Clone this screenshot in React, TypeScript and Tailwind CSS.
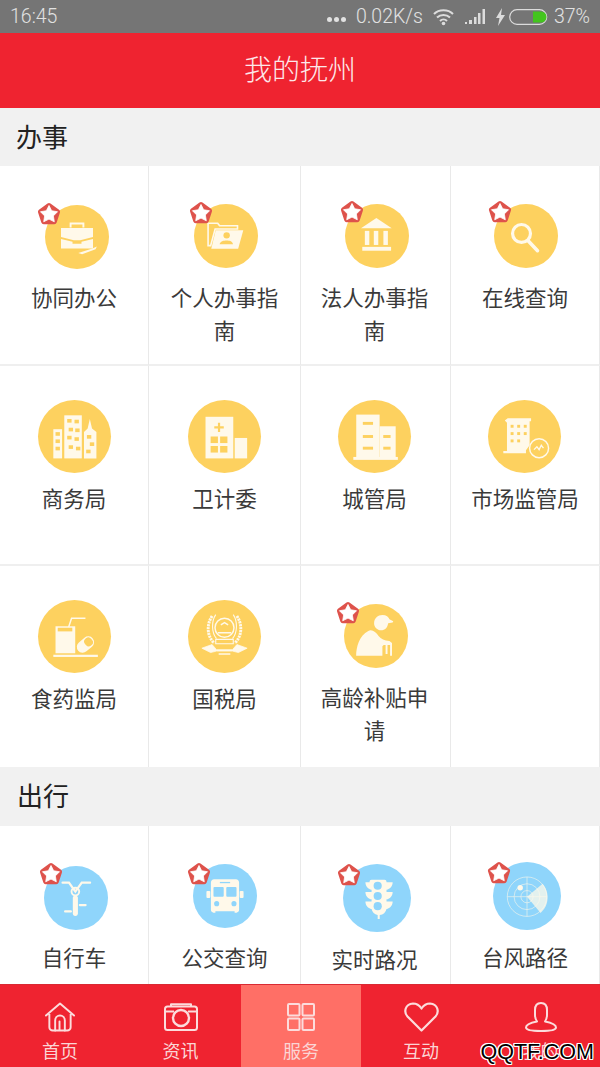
import React from "react";

const Y = "#fff9ea";
const YB = "#fdd15f";
const BL = "#8fd5fb";

const Briefcase = () => (
  <g fill={Y}>
    <path d="M25 36h50v14l-20 5H45L25 50z" />
    <path d="M25 53l18 4.500v3h14v-3l18-4.500v15H25z" />
    <path d="M40 35v-6h20v6" fill="none" stroke={Y} strokeWidth="3" />
    <path d="M52 75l22-7 7-3-2 4-21 8z" />
  </g>
);
const Folder = () => (
  <g>
    <path d="M22 30h15l3 4h28v5H33l-7 26h-4z" fill="none" stroke={Y} strokeWidth="2.500" />
    <path d="M34 41h43l-8 29H27z" fill={Y} />
    <circle cx="51" cy="49" r="5" fill={YB} />
    <path d="M40 63c1-5 6-6 11-6s9 1 10 6z" fill={YB} />
  </g>
);
const Bank = () => (
  <g fill={Y}>
    <path d="M49 22L25 38h48z" />
    <rect x="31" y="42" width="7" height="22" />
    <rect x="45" y="42" width="7" height="22" />
    <rect x="60" y="42" width="7" height="22" />
    <rect x="27" y="67" width="45" height="6" />
  </g>
);
const Search = () => (
  <g fill="none" stroke={Y}>
    <circle cx="43" cy="46" r="14" strokeWidth="5" />
    <path d="M53 57l15 16" strokeWidth="5.500" strokeLinecap="round" />
  </g>
);
const City = () => (
  <g>
    <g fill={Y}>
      <rect x="21" y="40" width="12" height="40" />
      <rect x="36" y="21" width="24" height="59" />
      <path d="M63 80V44l5-5 3-13 3 13 6 5v36z" />
    </g>
    <g fill={YB}>
      {[[24, 44], [24, 54], [24, 64], [40, 26], [50, 27], [42, 38], [51, 39], [40, 49], [50, 51], [42, 62], [52, 64], [67, 48], [71, 58], [66, 68]].map(([x, y], i) => (
        <rect key={i} x={x} y={y} width="6" height="5" />
      ))}
    </g>
  </g>
);
const Hospital = () => (
  <g>
    <g fill={Y}>
      <rect x="24" y="23" width="38" height="57" />
      <rect x="64" y="52" width="17" height="28" />
    </g>
    <g fill={YB}>
      <path d="M41 31h3v5h5v3h-5v5h-3v-5h-5v-3h5z" />
      <rect x="31" y="50" width="10" height="9" />
      <rect x="44" y="50" width="10" height="9" />
      <rect x="31" y="63" width="10" height="9" />
      <rect x="44" y="63" width="10" height="9" />
    </g>
  </g>
);
const Urban = () => (
  <g>
    <g fill={Y}>
      <rect x="25" y="20" width="32" height="60" />
      <rect x="57" y="36" width="22" height="44" />
      <rect x="21" y="78" width="61" height="4" />
    </g>
    <g fill={YB}>
      <rect x="34" y="30" width="14" height="4" />
      <rect x="34" y="48" width="14" height="4" />
      <rect x="34" y="64" width="14" height="4" />
      <rect x="62" y="48" width="10" height="4" />
      <rect x="62" y="64" width="10" height="4" />
    </g>
  </g>
);
const Market = () => (
  <g>
    <g fill={Y}>
      <path d="M23 28l4-3h32v4h-2v33l-5 7v4H21v-3h5V31z" />
    </g>
    <g fill={YB}>
      {[[31, 34], [40, 34], [49, 34], [31, 44], [40, 44], [49, 44], [31, 54], [40, 54]].map(([x, y], i) => (
        <rect key={i} x={x} y={y} width="4" height="4" />
      ))}
    </g>
    <circle cx="70" cy="66" r="13" fill={YB} stroke={Y} strokeWidth="2" />
    <path d="M63 68l4-4 3 4 3-6 3 4" fill="none" stroke={Y} strokeWidth="1.800" />
  </g>
);
const Food = () => (
  <g>
    <path d="M24 36h27v37H24z" fill={Y} />
    <rect x="27" y="38" width="20" height="5" fill={YB} />
    <path d="M42 37l4-12h19" fill="none" stroke={Y} strokeWidth="2" />
    <rect x="21" y="75" width="61" height="3" fill={Y} />
    <g transform="rotate(-40 65 61)">
      <rect x="52" y="53" width="26" height="16" rx="8" fill={Y} />
      <rect x="65" y="55" width="11" height="12" rx="5" fill={YB} />
    </g>
  </g>
);
const Emblem = () => (
  <g fill="none" stroke={Y}>
    <circle cx="50" cy="38" r="13" strokeWidth="2" />
    <path d="M45 34l5-3 5 3M41 45h18" strokeWidth="2" />
    <path d="M33 22c-8 12-7 28 3 37M67 22c8 12 7 28-3 37" strokeWidth="4" strokeDasharray="3 1" />
    <path d="M38 20c-6 9-6 24 1 33M62 20c6 9 6 24-1 33" strokeWidth="1.500" />
    <path d="M38 54h24v6H38z" strokeWidth="1.500" />
    <path d="M19 66l14-5 6 7h22l6-7 14 5-12 6-8-2H39l-8 2z" fill={Y} strokeWidth="1" />
    <path d="M42 74h16" strokeWidth="2" />
  </g>
);
const Elder = () => (
  <g fill={Y}>
    <path d="M47 30c0-8 6-13 13-13 6 0 10 3 11 7l6 3-1 2-7 1c-1 7-5 11-11 11-6 0-11-5-11-11z" />
    <path d="M38 42c6-3 12 2 16 8 4 5 9 7 17 8l4 3v20h-3V64h-4v14h-3V64h-3l-2 2v15H19c0-14 5-32 19-39z" />
  </g>
);
const Bike = () => (
  <g fill="none" stroke={Y} strokeLinecap="round">
    <path d="M29 26h10l10 14 10-14h13" strokeWidth="3.500" />
    <circle cx="49" cy="40" r="6" strokeWidth="3" />
    <path d="M49 50v24" strokeWidth="8" />
    <path d="M33 71h9M56 61h9" strokeWidth="3.500" />
  </g>
);
const Bus = () => (
  <g>
    <path d="M33 24h34c3 0 5 2 5 5v43c0 2-2 4-4 4h-3v-2H35v2h-3c-2 0-4-2-4-4V29c0-3 2-5 5-5z" fill={Y} />
    <rect x="32" y="36" width="16" height="15" rx="1.500" fill={BL} />
    <rect x="52" y="36" width="16" height="15" rx="1.500" fill={BL} />
    <rect x="42" y="28" width="16" height="2" fill={BL} />
    <circle cx="37" cy="62" r="4" fill={BL} />
    <circle cx="64" cy="62" r="4" fill={BL} />
    <rect x="21" y="42" width="6" height="11" rx="1.500" fill={Y} />
    <rect x="73" y="42" width="6" height="11" rx="1.500" fill={Y} />
  </g>
);
const Traffic = () => (
  <g>
    <path d="M30 27h9v-1a3 3 0 013-3h19a3 3 0 013 3v1h9c0 6-4 10-9 11v3h9c0 6-4 10-9 11v3h9c0 6-4 10-9 11a12 12 0 01-10 9v6h-3v-6a12 12 0 01-9-9c-5-1-9-5-9-11h9v-3c-5-1-9-5-9-11h9v-3c-5-1-9-5-9-11z" fill={Y} />
    <circle cx="51" cy="32" r="6" fill={BL} />
    <circle cx="51" cy="47" r="6" fill={BL} />
    <circle cx="51" cy="62" r="6" fill={BL} />
  </g>
);
const Radar = () => (
  <g>
    <g fill="none" stroke={Y} strokeWidth="1" opacity="0.85">
      <circle cx="50" cy="51" r="29" />
      <circle cx="50" cy="51" r="19" />
      <circle cx="50" cy="51" r="9" />
      <path d="M50 22v58M21 51h58" />
    </g>
    <path d="M50 51l23-19c7 8 9 20 6 29-1 5-5 10-9 14z" fill={Y} opacity="0.75" />
    <circle cx="40" cy="38" r="4" fill={Y} />
  </g>
);

const starD = "M13 4.500L15.700 9.780 21.560 10.720 17.370 14.920 18.290 20.780 13 18.100 7.710 20.780 8.630 14.920 4.440 10.720 10.300 9.780z";
const pentD = "M13 4.500L21.560 10.720 18.290 20.780 7.710 20.780 4.440 10.720z";

const Star = ({ className }: { className: string }) => (
  <svg viewBox="0 0 26 26" className={"absolute w-[26px] h-[26px] " + className}>
    <path d={pentD} fill="#de524b" stroke="#de524b" strokeWidth="5" strokeLinejoin="round" />
    <path d={starD} fill="#fff" stroke="#fff" strokeWidth="0.800" strokeLinejoin="round" />
  </svg>
);

type Item = {
  label: string;
  Icon: () => React.ReactElement;
  top: string;
  circle: string;
  star?: string;
  text?: string;
  pad?: string;
};

const Cell = ({ it, rowCls }: { it: Item; rowCls: string }) => (
  <div className={"flex flex-col items-center border-r border-r-[#e9e9e9] border-b-[#efefef] bg-white " + rowCls}>
    <div className={"w-full flex justify-center " + (it.text ?? "h-[114px]") + " " + it.top}>
      <div className={"relative rounded-full " + it.circle}>
        <svg viewBox="0 0 100 100" className="w-full h-full">
          <it.Icon />
        </svg>
        {it.star && <Star className={it.star} />}
      </div>
    </div>
    <div className={"w-full text-center text-[21.500px] leading-[33px] text-[#3a3a3a] " + (it.pad ?? "px-[15px]")}>{it.label}</div>
  </div>
);

const Y64 = "w-[64px] h-[64px] bg-[#fdd15f]";
const Y73 = "w-[73px] h-[73px] bg-[#fdd15f]";
const B64 = "w-[64px] h-[64px] bg-[#8fd5fb]";
const B68 = "w-[68px] h-[68px] bg-[#8fd5fb]";
const P3 = "pl-[14px] pr-[16px]";

const row1: Item[] = [
  { label: "协同办公", Icon: Briefcase, top: "pt-[39px] pl-[5px]", circle: Y64, star: "left-[-9px] top-[-4px]" },
  { label: "个人办事指南", Icon: Folder, top: "pt-[38px] pl-[3px]", circle: Y64, star: "left-[-6px] top-[-4px]" },
  { label: "法人办事指南", Icon: Bank, top: "pt-[38px] pl-[3px]", circle: Y64, star: "left-[-6px] top-[-5px]", pad: P3 },
  { label: "在线查询", Icon: Search, top: "pt-[38px] pl-[2px]", circle: Y64, star: "left-[-7px] top-[-5px]" },
];
const row2: Item[] = [
  { label: "商务局", Icon: City, top: "pt-[34px]", circle: Y73, text: "h-[115px]" },
  { label: "卫计委", Icon: Hospital, top: "pt-[34px]", circle: Y73, text: "h-[115px]" },
  { label: "城管局", Icon: Urban, top: "pt-[34px] pr-[3px]", circle: Y73, text: "h-[115px]", pad: P3 },
  { label: "市场监管局", Icon: Market, top: "pt-[34px] pr-[1px]", circle: Y73, text: "h-[115px]" },
];
const row3: Item[] = [
  { label: "食药监局", Icon: Food, top: "pt-[34px]", circle: Y73, text: "h-[115px]" },
  { label: "国税局", Icon: Emblem, top: "pt-[34px]", circle: Y73, text: "h-[115px]" },
  { label: "高龄补贴申请", Icon: Elder, top: "pt-[38px] pl-[1px]", circle: Y64, star: "left-[-9px] top-[-4px]", pad: P3 },
];
const row4: Item[] = [
  { label: "自行车", Icon: Bike, top: "pt-[40px] pl-[4px]", circle: B64, star: "left-[-6px] top-[-5px]" },
  { label: "公交查询", Icon: Bus, top: "pt-[38px]", circle: B64, star: "left-[-7px] top-[-3px]" },
  { label: "实时路况", Icon: Traffic, top: "pt-[38px] pl-[3px]", circle: B68, star: "left-[-7px] top-[-2px]", text: "h-[116px]", pad: P3 },
  { label: "台风路径", Icon: Radar, top: "pt-[36px] pl-[4px]", circle: B68, star: "left-[-7px] top-[-2px]" },
];

const gridCls = "grid grid-cols-[149px_152px_150px_149px]";

const Section = ({ title, cls }: { title: string; cls: string }) => (
  <div className={"flex items-center pb-[4px] bg-[#f1f1f1] text-[26px] text-[#222] " + cls}>{title}</div>
);

const navStroke = "#fcdcdc";
const HomeI = () => (
  <svg viewBox="0 0 32 31" className="w-[32px] h-[30px]" fill="none" stroke={navStroke} strokeWidth="2" strokeLinejoin="round" strokeLinecap="round">
    <path d="M1.500 14L16 1.500 30.500 14M5 11v15a3.500 3.500 0 003.500 3.500H11V19a5 5 0 0110 0v10.500h2.500A3.500 3.500 0 0027 26V11" />
    <path d="M11 29.500h4.500V20M21 29.500h-4.500" />
  </svg>
);
const CamI = () => (
  <svg viewBox="0 0 34 28" className="w-[34px] h-[28px]" fill="none" stroke={navStroke} strokeWidth="2" strokeLinejoin="round">
    <rect x="1" y="3.500" width="32" height="23.500" rx="2.500" />
    <path d="M7 3.500V1.200h20v2.300M1 8.500h9M24 8.500h9" />
    <circle cx="17" cy="15" r="8" strokeWidth="2.400" />
  </svg>
);
const GridI = () => (
  <svg viewBox="0 0 28 28" className="w-[28px] h-[28px]" fill="none" stroke={navStroke} strokeWidth="2">
    <rect x="1" y="1" width="11.500" height="11.500" rx="1" />
    <rect x="15.500" y="1" width="11.500" height="11.500" rx="1" />
    <rect x="1" y="15.500" width="11.500" height="11.500" rx="1" />
    <rect x="15.500" y="15.500" width="11.500" height="11.500" rx="1" />
  </svg>
);
const HeartI = () => (
  <svg viewBox="0 0 35 30" className="w-[35px] h-[30px]" fill="none" stroke={navStroke} strokeWidth="2.200" strokeLinejoin="round">
    <path d="M17.500 28.500L3.500 14.500C-.5 10 1 2 9 1.500c4 0 6.500 2 8.500 5 2-3 4.500-5 8.500-5 8 .5 9.500 8.500 5.500 13z" />
  </svg>
);
const UserI = () => (
  <svg viewBox="0 0 32 30" className="w-[32px] h-[30px]" fill="none" stroke={navStroke} strokeWidth="2" strokeLinejoin="round">
    <path d="M16 1c-4 0-6 3-6 7v5c0 3 1 5 2 6.500-5 1-11 2.500-11 6 0 2.500 6 3.500 15 3.500s15-1 15-3.500c0-3.500-6-5-11-6 1-1.500 2-3.500 2-6.500V8c0-4-2-7-6-7z" />
  </svg>
);

const tabs = [
  { label: "首页", Icon: HomeI, cls: "w-[120px]" },
  { label: "资讯", Icon: CamI, cls: "w-[121px]" },
  { label: "服务", Icon: GridI, cls: "w-[120px] bg-[#ff6f66]" },
  { label: "互动", Icon: HeartI, cls: "w-[120px]" },
  { label: "我的", Icon: UserI, cls: "w-[119px]" },
];

const Wifi = () => (
  <svg viewBox="0 0 22 18" className="w-[22px] h-[18px]" fill="none" stroke="#dcdcdc" strokeWidth="2">
    <path d="M1 6c5-5 14-5 19 0M4 9.500c3.500-3.500 9.500-3.500 13 0M7 13c2-2 5-2 7 0" />
    <circle cx="10.500" cy="15.500" r="1.800" fill="#dcdcdc" stroke="none" />
  </svg>
);
const Signal = () => (
  <svg viewBox="0 0 21 16" className="w-[21px] h-[16px]" fill="#dcdcdc">
    <rect x="0" y="13" width="2" height="2" />
    <rect x="4" y="11" width="3" height="4" />
    <rect x="9" y="8" width="2.500" height="7" />
    <rect x="13" y="4" width="2.500" height="11" />
    <rect x="17.500" y="0" width="2.500" height="15" />
  </svg>
);
const Bolt = () => (
  <svg viewBox="0 0 9 18" className="w-[9px] h-[18px]" fill="#dcdcdc">
    <path d="M6 0L0 10h3.500L2 18l7-11H5z" />
  </svg>
);
const Battery = () => (
  <svg viewBox="0 0 40 16" className="w-[40px] h-[16px]" fill="none">
    <rect x="0.700" y="0.700" width="37" height="14.600" rx="7.300" stroke="#dcdcdc" strokeWidth="1.200" />
    <path d="M24 2.500h8a5.500 5.500 0 010 11h-8z" fill="#43c51e" />
  </svg>
);

export default function App() {
  return (
    <div className="relative w-[600px] h-[1067px] flex flex-col overflow-hidden bg-white font-['Noto_Sans_CJK_SC',sans-serif]">
      <div className="h-[33px] shrink-0 bg-[#757575] flex items-center pl-[10px] pr-[10px] text-[19.500px] font-['Roboto',sans-serif] font-light text-[#e2e2e2]">
        <span className="mt-[1px]">16:45</span>
        <div className="ml-auto flex items-center">
          <div className="flex gap-[2px] mt-[6px]">
            <span className="w-[5px] h-[5px] rounded-full bg-[#e2e2e2]" />
            <span className="w-[5px] h-[5px] rounded-full bg-[#e2e2e2]" />
            <span className="w-[5px] h-[5px] rounded-full bg-[#e2e2e2]" />
          </div>
          <span className="ml-[10px] mt-[1px]">0.02K/s</span>
          <div className="ml-[10px]"><Wifi /></div>
          <div className="ml-[10px]"><Signal /></div>
          <div className="ml-[10px]"><Bolt /></div>
          <div className="ml-[4px]"><Battery /></div>
          <span className="ml-[5px] mt-[1px]">37%</span>
        </div>
      </div>
      <div className="h-[75px] shrink-0 bg-[#ef2330] flex items-center justify-center pb-[6px] text-[28px] text-[#fde8ea] font-light">
        我的抚州
      </div>
      <div className="flex-1 min-h-0 overflow-hidden">
        <Section title="办事" cls="h-[58px] pl-[16px]" />
        <div className={gridCls}>
          {row1.map((it) => <Cell key={it.label} it={it} rowCls="h-[200px] border-b-2" />)}
        </div>
        <div className={gridCls}>
          {row2.map((it) => <Cell key={it.label} it={it} rowCls="h-[200px] border-b-2" />)}
        </div>
        <div className={gridCls}>
          {row3.map((it) => <Cell key={it.label} it={it} rowCls="h-[201px]" />)}
          <div className="h-[201px] bg-white border-r border-r-[#e9e9e9]" />
        </div>
        <Section title="出行" cls="h-[59px] pl-[17px]" />
        <div className={gridCls}>
          {row4.map((it) => <Cell key={it.label} it={it} rowCls="h-[200px]" />)}
        </div>
      </div>
      <div className="h-[83px] shrink-0 flex bg-[#ef2330] border-t border-[#d92a33] text-[18px] text-[#fbd5d5]">
        {tabs.map(({ label, Icon, cls }) => (
          <div key={label} className={"flex flex-col items-center pt-[17px] " + cls}>
            <div className="h-[30px] flex items-center"><Icon /></div>
            <div className="mt-[5px] leading-[26px]">{label}</div>
          </div>
        ))}
      </div>
      <div className="absolute right-[6px] bottom-[1px] text-[21.500px] leading-[28px] text-black font-['Liberation_Sans',sans-serif] [text-shadow:1px_0_0_#fff,-1px_0_0_#fff,0_1px_0_#fff,0_-1px_0_#fff,1px_1px_0_#fff,-1px_-1px_0_#fff,1px_-1px_0_#fff,-1px_1px_0_#fff]">
        QQTF.COM
      </div>
    </div>
  );
}
